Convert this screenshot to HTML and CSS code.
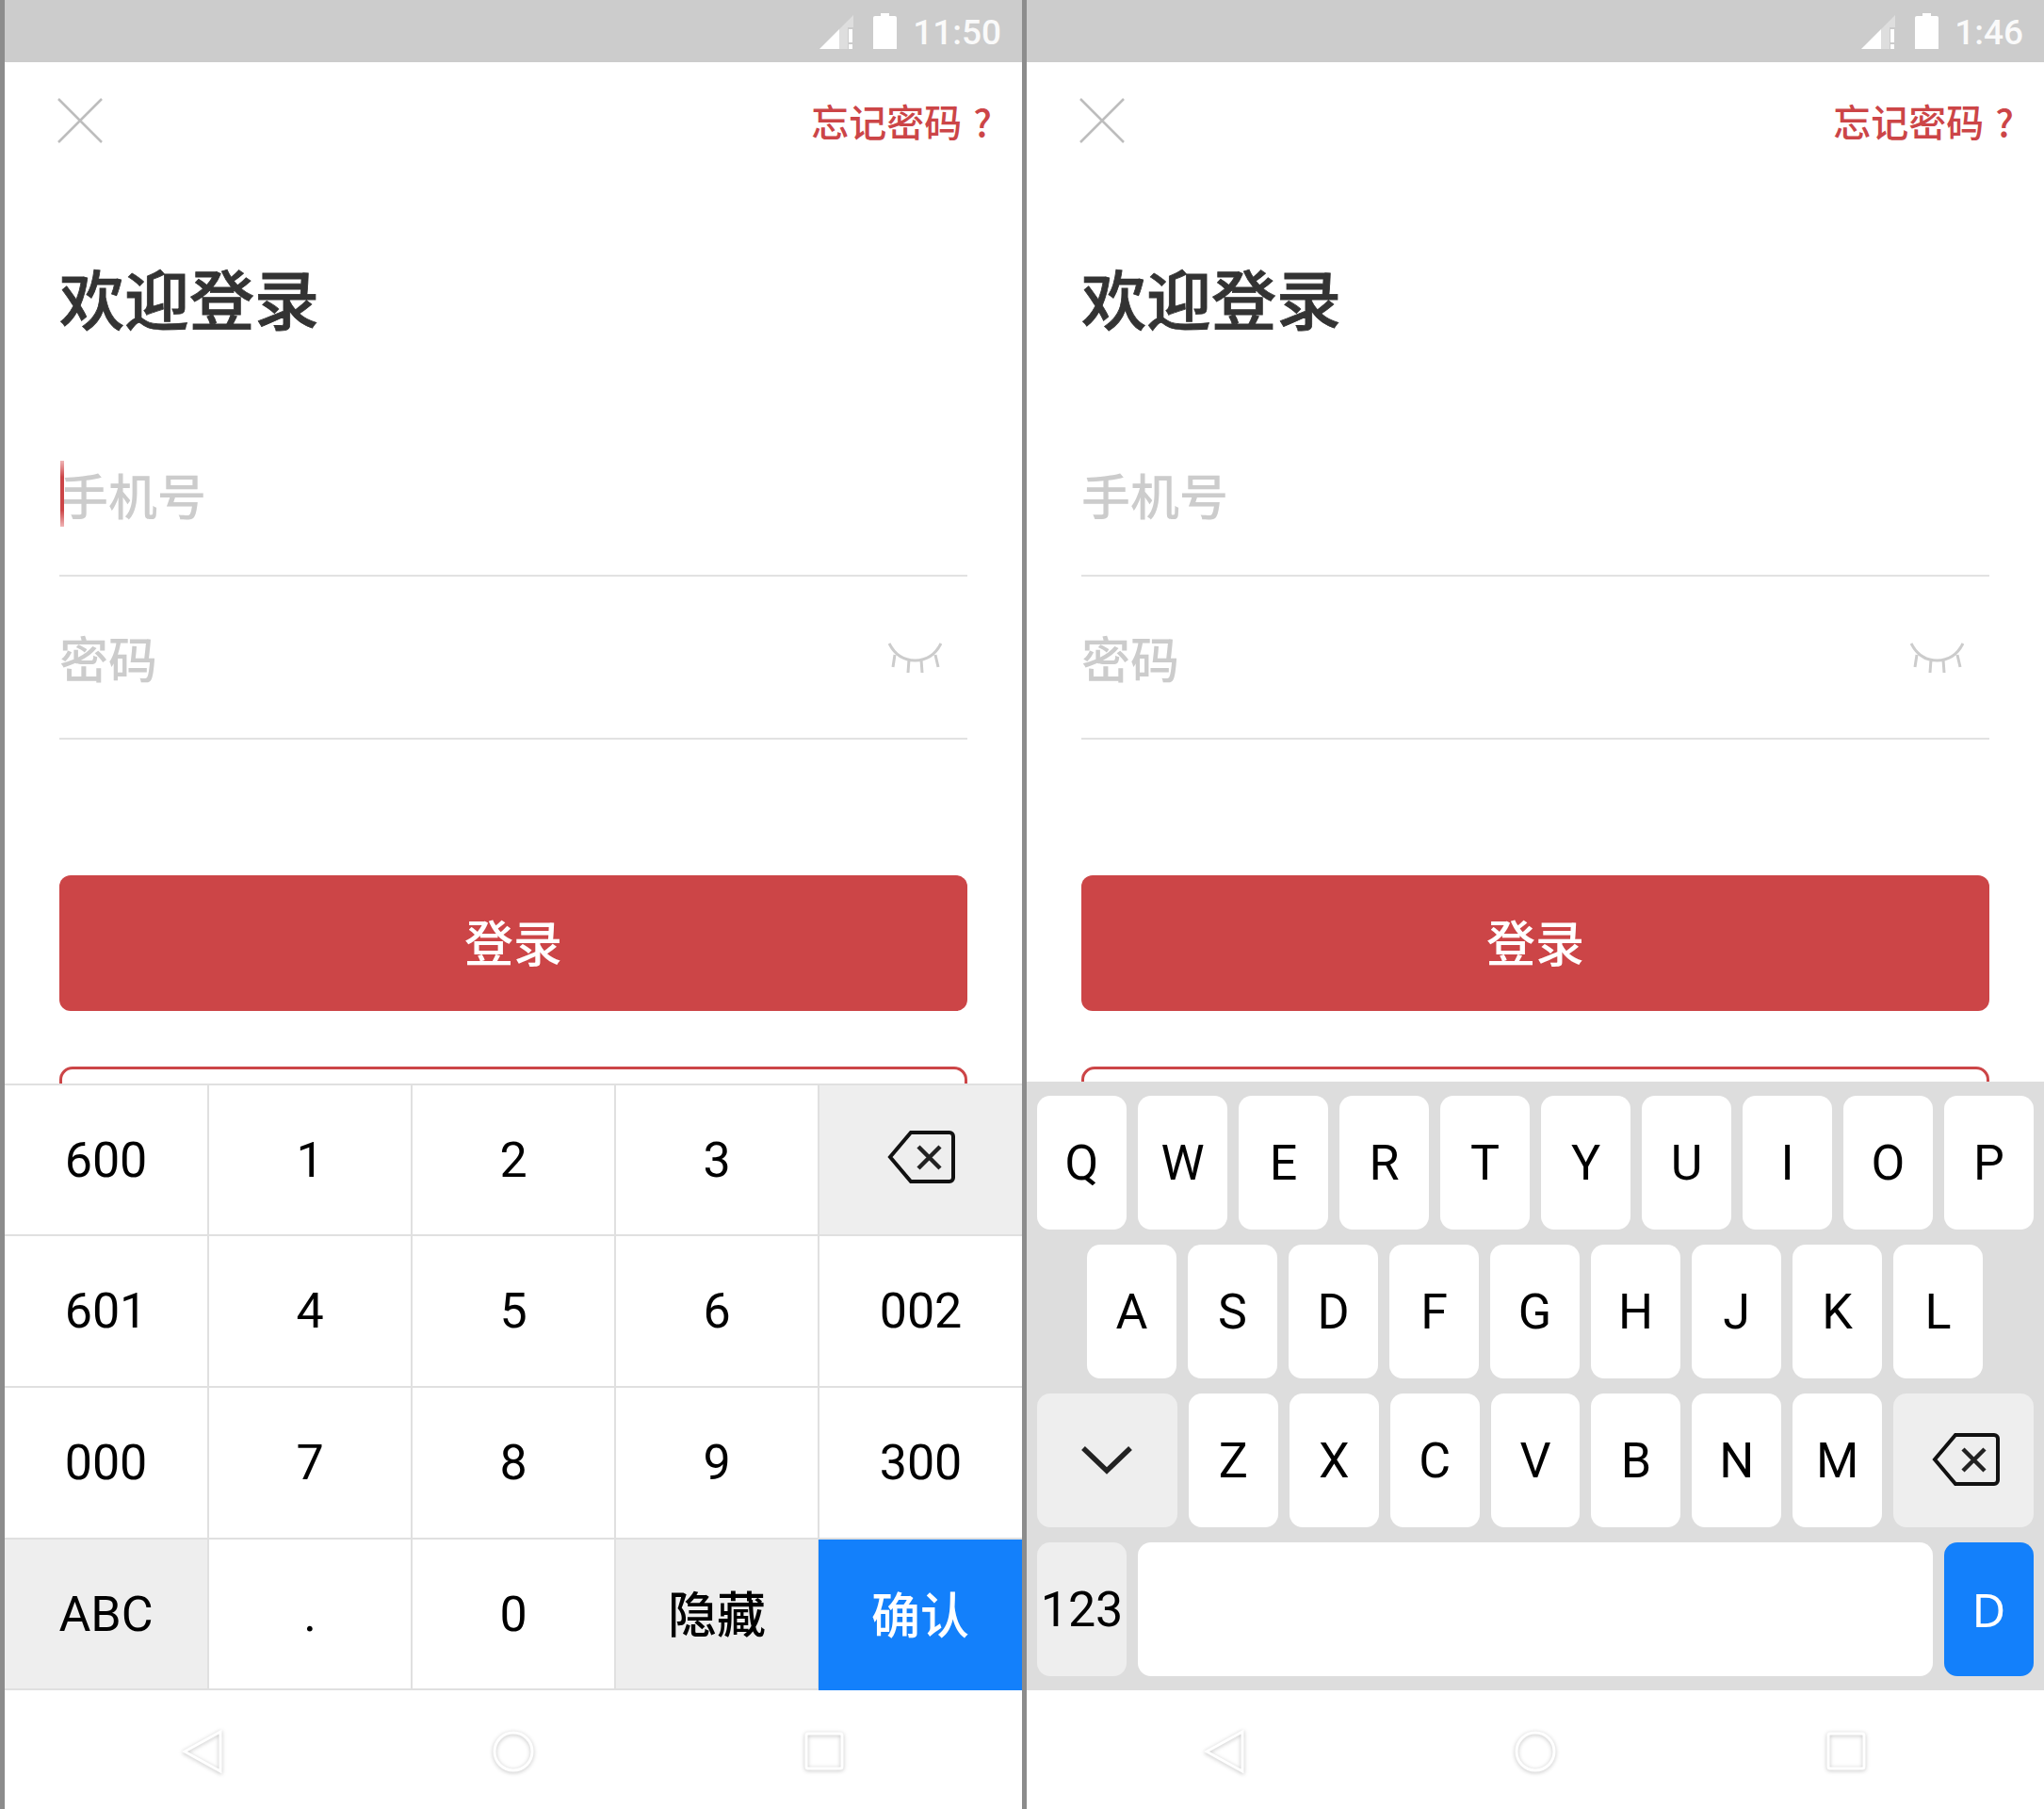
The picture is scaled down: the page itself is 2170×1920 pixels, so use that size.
FILE: index.html
```html
<!DOCTYPE html>
<html>
<head>
    <title>login keyboards</title>
    <link rel="stylesheet" href="styles.css">
</head>
<body>
    <div class="screens">

        <!-- number keypad -->
        <div class="phone">
            <div class="statusbar">
                <svg class="signal" width="36" height="36" viewBox="0 0 36 36">
                    <polygon points="21,36 21,15 36,0 36,13 30,13 30,36" fill="#dedede"/>
                    <polygon points="0,36 21,15 21,36" fill="#fff"/>
                    <rect x="31" y="15" width="4" height="14" fill="#fff"/>
                    <rect x="31" y="31" width="4" height="5" fill="#fff"/>
                </svg>
                <svg class="battery" width="25" height="38" viewBox="0 0 25 38">
                    <path d="M8 0h9v3h6a2 2 0 0 1 2 2v33H0V5a2 2 0 0 1 2-2h6z" fill="#fff"/>
                </svg>
                <span class="clock">11:50</span>
            </div>
            <div class="main">
                <div class="topbar">
                    <svg class="close" width="48" height="48" viewBox="0 0 48 48">
                        <path d="M1 1L47 47M47 1L1 47" stroke="#bdbdbd" stroke-width="2.5" fill="none"/>
                    </svg>
                    <span class="forgot">忘记密码 ?</span>
                </div>
                <h1 class="title">欢迎登录</h1>
                <div class="field">
                    <i class="cursor"></i>
                    <span class="hint">手机号</span>
                </div>
                <div class="field">
                    <span class="hint">密码</span>
                    <svg class="eye" width="57" height="32" viewBox="0 0 57 32">
                        <path d="M1 1C7 13 17 19 28.500 19S50 13 56 1M7 13L5 26M22 18L21 32M35 18L36 32M50 13L53 26" stroke="#ccc" stroke-width="3" fill="none"/>
                    </svg>
                </div>
                <div class="btn-login">登录</div>
                <div class="btn-outline"></div>
            </div>
            <div class="keypad">
                <div class="cell">600</div>
                <div class="cell">1</div>
                <div class="cell">2</div>
                <div class="cell">3</div>
                <div class="cell gray">
                    <svg class="del del-pad" width="72" height="56" viewBox="0 0 72 56">
                        <path d="M25 2H66a4 4 0 0 1 4 4V50a4 4 0 0 1-4 4H25L3 28Z" stroke="#111" stroke-width="4" fill="none"/>
                        <path d="M33 17L56 40M56 17L33 40" stroke="#222" stroke-width="4.500" fill="none"/>
                    </svg>
                </div>
                <div class="cell">601</div>
                <div class="cell">4</div>
                <div class="cell">5</div>
                <div class="cell">6</div>
                <div class="cell">002</div>
                <div class="cell">000</div>
                <div class="cell">7</div>
                <div class="cell">8</div>
                <div class="cell">9</div>
                <div class="cell">300</div>
                <div class="cell gray">ABC</div>
                <div class="cell">.</div>
                <div class="cell">0</div>
                <div class="cell gray cn">隐藏</div>
                <div class="cell blue cn">确认</div>
            </div>
            <div class="navbar">
                <svg class="nav-icon" width="44" height="48" viewBox="0 0 44 48"><path d="M41 3V45L3 24Z"/></svg>
                <svg class="nav-icon" width="44" height="48" viewBox="0 0 44 48"><circle cx="22" cy="24" r="20"/></svg>
                <svg class="nav-icon" width="44" height="48" viewBox="0 0 44 48"><rect x="3" y="5" width="38" height="37" rx="2"/></svg>
            </div>
        </div>

        <!-- letter keyboard -->
        <div class="phone">
            <div class="statusbar">
                <svg class="signal" width="36" height="36" viewBox="0 0 36 36">
                    <polygon points="21,36 21,15 36,0 36,13 30,13 30,36" fill="#dedede"/>
                    <polygon points="0,36 21,15 21,36" fill="#fff"/>
                    <rect x="31" y="15" width="4" height="14" fill="#fff"/>
                    <rect x="31" y="31" width="4" height="5" fill="#fff"/>
                </svg>
                <svg class="battery" width="25" height="38" viewBox="0 0 25 38">
                    <path d="M8 0h9v3h6a2 2 0 0 1 2 2v33H0V5a2 2 0 0 1 2-2h6z" fill="#fff"/>
                </svg>
                <span class="clock">1:46</span>
            </div>
            <div class="main">
                <div class="topbar">
                    <svg class="close" width="48" height="48" viewBox="0 0 48 48">
                        <path d="M1 1L47 47M47 1L1 47" stroke="#bdbdbd" stroke-width="2.5" fill="none"/>
                    </svg>
                    <span class="forgot">忘记密码 ?</span>
                </div>
                <h1 class="title">欢迎登录</h1>
                <div class="field">
                    <span class="hint">手机号</span>
                </div>
                <div class="field">
                    <span class="hint">密码</span>
                    <svg class="eye" width="57" height="32" viewBox="0 0 57 32">
                        <path d="M1 1C7 13 17 19 28.500 19S50 13 56 1M7 13L5 26M22 18L21 32M35 18L36 32M50 13L53 26" stroke="#ccc" stroke-width="3" fill="none"/>
                    </svg>
                </div>
                <div class="btn-login">登录</div>
                <div class="btn-outline"></div>
            </div>
            <div class="keyboard">
                <div class="key-row">
                    <div class="key">Q</div><div class="key">W</div><div class="key">E</div><div class="key">R</div><div class="key">T</div>
                    <div class="key">Y</div><div class="key">U</div><div class="key">I</div><div class="key">O</div><div class="key">P</div>
                </div>
                <div class="key-row row-center">
                    <div class="key">A</div><div class="key">S</div><div class="key">D</div><div class="key">F</div><div class="key">G</div>
                    <div class="key">H</div><div class="key">J</div><div class="key">K</div><div class="key">L</div>
                </div>
                <div class="key-row">
                    <div class="key key-wide gray">
                        <svg class="chevron" width="54" height="32" viewBox="0 0 54 32">
                            <path d="M2 3L27 27L52 3" stroke="#222" stroke-width="5.500" fill="none"/>
                        </svg>
                    </div>
                    <div class="key">Z</div><div class="key">X</div><div class="key">C</div><div class="key">V</div>
                    <div class="key">B</div><div class="key">N</div><div class="key">M</div>
                    <div class="key key-wide gray">
                        <svg class="del del-key" width="72" height="56" viewBox="0 0 72 56">
                            <path d="M25 2H66a4 4 0 0 1 4 4V50a4 4 0 0 1-4 4H25L3 28Z" stroke="#111" stroke-width="4" fill="none"/>
                            <path d="M33 17L56 40M56 17L33 40" stroke="#222" stroke-width="4.500" fill="none"/>
                        </svg>
                    </div>
                </div>
                <div class="key-row">
                    <div class="key gray">123</div>
                    <div class="key key-space"></div>
                    <div class="key blue key-done">D</div>
                </div>
            </div>
            <div class="navbar">
                <svg class="nav-icon" width="44" height="48" viewBox="0 0 44 48"><path d="M41 3V45L3 24Z"/></svg>
                <svg class="nav-icon" width="44" height="48" viewBox="0 0 44 48"><circle cx="22" cy="24" r="20"/></svg>
                <svg class="nav-icon" width="44" height="48" viewBox="0 0 44 48"><rect x="3" y="5" width="38" height="37" rx="2"/></svg>
            </div>
        </div>

    </div>
</body>
</html>
```

FILE: styles.css
```css
body {
    margin: 0;
    font-family: Roboto, "Noto Sans CJK SC", sans-serif;
    color: #000;
}

.screens {
    display: flex;
    gap: 5px;
    width: 2170px;
    height: 1920px;
    padding-left: 5px;
    box-sizing: border-box;
    overflow: hidden;
    background-color: #8c8c8c;
}

.phone {
    display: flex;
    flex-direction: column;
    width: 1080px;
    background-color: #fff;
}

.statusbar {
    display: flex;
    align-items: flex-start;
    justify-content: flex-end;
    height: 66px;
    padding-right: 22px;
    box-sizing: border-box;
    background-color: #ccc;
}

.signal {
    margin-top: 16px;
    margin-right: 21px;
}

.battery {
    margin-top: 14px;
    margin-right: 17px;
}

.clock {
    padding-top: 2px;
    font-size: 37px;
    font-weight: 500;
    line-height: 66px;
    color: #fafafa;
}

/* login form */
.main {
    flex: 1;
    overflow: hidden;
}

.topbar {
    display: flex;
    align-items: center;
    justify-content: space-between;
    height: 124px;
    padding: 0 32px 0 56px;
}

.close {
    display: block;
}

.forgot {
    font-size: 40px;
    font-weight: 500;
    word-spacing: 3px;
    font-family: "Noto Sans CJK SC", sans-serif;
    color: #cc4547;
}

.title {
    margin: 91px 58px 90px;
    font-size: 69px;
    font-weight: 500;
    line-height: 68px;
    font-family: "Noto Sans CJK SC", sans-serif;
    color: #333;
    -webkit-text-stroke: 0.8px #333;
}

.field {
    position: relative;
    display: flex;
    align-items: center;
    justify-content: space-between;
    height: 173px;
    margin: 0 58px;
    padding-right: 27px;
    box-sizing: border-box;
    border-bottom: 2px solid #e2e2e2;
}

.hint {
    font-size: 52px;
    font-weight: 500;
    font-family: "Noto Sans CJK SC", sans-serif;
    color: #ccc;
}

.cursor {
    position: absolute;
    left: 1px;
    top: 50px;
    width: 4px;
    height: 70px;
    background: linear-gradient(#f0b5b6, #cc4547 25%, #cc4547 75%, #f0b5b6);
}

.btn-login {
    height: 144px;
    margin: 144px 58px 0;
    border-radius: 12px;
    font-size: 52px;
    font-weight: 500;
    line-height: 140px;
    font-family: "Noto Sans CJK SC", sans-serif;
    text-align: center;
    color: #fff;
    background-color: #cc4547;
}

.btn-outline {
    height: 144px;
    margin: 59px 58px 0;
    box-sizing: border-box;
    border: 3px solid #cc4547;
    border-radius: 14px;
}

/* number keypad */
.keypad {
    display: grid;
    grid-template-columns: 217px 216px 216px 216px 215px;
    grid-template-rows: 160px 161px 161px 160px;
    padding-top: 2px;
    background-color: #e0e0e0;
}

.cell {
    display: flex;
    align-items: center;
    justify-content: center;
    border-right: 2px solid #e0e0e0;
    border-bottom: 2px solid #e0e0e0;
    box-sizing: border-box;
    font-size: 52px;
    background-color: #fff;
}

.cell:nth-child(5n) {
    border-right: none;
}

.cell.cn {
    padding-bottom: 5px;
    font-weight: 500;
}

.cell.gray {
    background-color: #eee;
}

.cell.blue {
    margin-left: -1px;
    border-bottom: none;
    color: #fff;
    background-color: #1380fb;
}

.del-pad {
    margin-bottom: 6px;
}

/* letter keyboard */
.keyboard {
    display: flex;
    flex-direction: column;
    gap: 16px;
    padding: 15px 11px;
    background-color: #ddd;
}

.key-row {
    display: flex;
    gap: 12px;
}

.row-center {
    padding-left: 53px;
}

.key {
    display: flex;
    align-items: center;
    justify-content: center;
    width: 95px;
    height: 142px;
    border-radius: 14px;
    font-size: 52px;
    background-color: #fff;
}

.key.gray {
    background-color: #eee;
}

.key.blue {
    font-family: "Noto Sans", sans-serif;
    font-size: 49px;
    color: #fff;
    background-color: #1380fb;
}

.key-wide {
    width: 149px;
}

.key-space {
    width: 844px;
}

.del-key {
    margin-left: 4px;
    margin-bottom: 3px;
}

/* android nav buttons */
.navbar {
    display: flex;
    align-items: center;
    justify-content: center;
    gap: 286px;
    height: 126px;
    box-sizing: border-box;
    padding-top: 4px;
}

.nav-icon {
    fill: none;
    stroke: #fff;
    stroke-width: 3;
    filter: drop-shadow(0 1px 2px rgba(0, 0, 0, 0.25));
}
```
